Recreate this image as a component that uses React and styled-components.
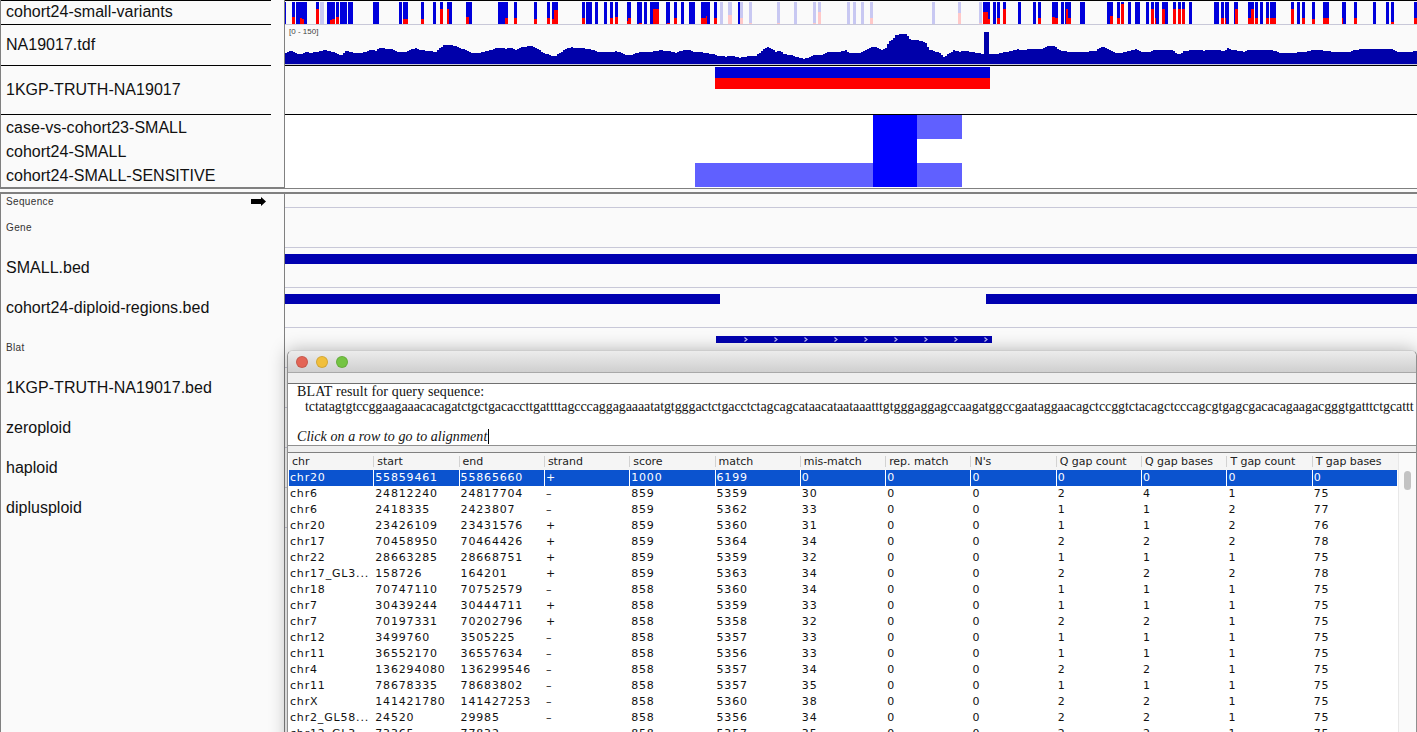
import React from 'react';
import styled, { createGlobalStyle } from 'styled-components';

const GlobalStyle = createGlobalStyle`
  html, body {
    margin: 0;
    padding: 0;
    background: #fafafa;
  }
  * { box-sizing: border-box; }
`;

const Page = styled.div`
  position: relative;
  width: 1417px;
  height: 732px;
  overflow: hidden;
  display: flex;
  flex-direction: column;
  background: #fafafa;
  font-family: "Liberation Sans", Arial, sans-serif;
  color: #111;
`;

const TopPanel = styled.div`
  border-bottom: 2px solid #808080;
`;

const LowerPanel = styled.div`
  margin-top: 3px;
  border-top: 2px solid #808080;
  flex: 1;
  display: flex;
  flex-direction: column;
`;

const Row = styled.div`
  display: grid;
  grid-template-columns: 285px 1fr;
  height: ${p => p.$h}px;
  flex: ${p => (p.$fill ? 1 : 'none')};
`;

const NameCell = styled.div`
  border-left: 1px solid #808080;
  border-right: 1px solid #808080;
  min-width: 0;
`;

const NameBox = styled.div`
  width: 270px;
  height: 100%;
  padding: 0 5px ${p => (p.$lift ? 2 : 0)}px;
  display: flex;
  flex-direction: column;
  justify-content: center;
  border-top: ${p => (p.$top ? '1px solid #000' : 'none')};
  border-bottom: ${p => (p.$line ? '1px solid #000' : 'none')};
`;

const SequenceBox = styled(NameBox)`
  flex-direction: row;
  justify-content: space-between;
  align-items: center;
`;

const Name = styled.div`
  font-size: ${p => (p.$small ? 10 : 16)}px;
  line-height: ${p => (p.$stack ? '24px' : 'normal')};
  letter-spacing: ${p => (p.$small ? '0.35px' : '0.02px')};
  white-space: nowrap;
  color: ${p => (p.$small ? '#333' : '#111')};
`;

const DataCell = styled.div`
  position: relative;
  min-width: 0;
  background: ${p => p.$bg || '#fafafa'};
  border-top: ${p => (p.$top ? '1px solid #000' : 'none')};
  border-bottom: 1px solid ${p => p.$line || '#c8c8d8'};
`;

const TrackSvg = styled.svg`
  display: block;
  width: 1132px;
  height: 100%;
`;

const CoverageBox = styled.div`
  height: 100%;
  border-bottom: 1px solid #c8c8dc;
`;

const RangeLabel = styled.span`
  position: absolute;
  left: 4px;
  top: 2px;
  font-size: 8px;
  color: #444;
`;

// BLAT window floats above the tracks
const Window = styled.div`
  position: absolute;
  left: 287px;
  top: 350px;
  width: 1130px;
  height: 420px;
  background: #eeeeee;
  border: 1px solid #8f8f8f;
  border-top-color: #cdcdcd;
  border-radius: 6px 6px 0 0;
  box-shadow: 0 0 18px rgba(0, 0, 0, 0.28);
`;

const TitleBar = styled.div`
  height: 22px;
  padding: 0 8px;
  display: flex;
  align-items: center;
  gap: 8px;
  border-radius: 5px 5px 0 0;
  background: linear-gradient(#ececec, #cfcfcf);
  border-bottom: 1px solid #a8a8a8;
`;

const Light = styled.span`
  width: 12px;
  height: 12px;
  border-radius: 50%;
  background: ${p => p.$color};
  border: 1px solid rgba(0, 0, 0, 0.12);
`;

const Strip = styled.div`
  height: ${p => p.$h}px;
  background: #eeeeee;
`;

const TextPane = styled.div`
  height: 63px;
  background: #fff;
  border-top: 1px solid #707070;
  border-bottom: 1px solid #909090;
  padding: 0 0 0 9px;
  font-family: "Liberation Serif", "Times New Roman", serif;
  font-size: 14px;
  line-height: 15px;
  color: #111;
  white-space: nowrap;
  overflow: hidden;
`;

const Heading = styled.div`
  letter-spacing: 0.13px;
`;

const Query = styled.div`
  padding-left: 8px;
  margin-bottom: 15px;
  letter-spacing: -0.088px;
`;

const Hint = styled.em`
  display: inline-block;
  padding-right: 1px;
  border-right: 1px solid #000;
  line-height: 15px;
  letter-spacing: 0.07px;
`;

const TableArea = styled.div`
  display: grid;
  grid-template-columns: 1109px 18px;
  padding-left: 1px;
  background: #fff;
  border-top: 1px solid #808080;
  font-family: "DejaVu Sans", Verdana, sans-serif;
  font-size: 11px;
`;

const Columns = styled.div`
  display: grid;
  grid-template-columns: repeat(13, 1fr);
  height: ${p => p.$h}px;
  align-items: center;
  background: ${p => p.$bg};
  color: ${p => p.$color};
`;

const HeadCell = styled.div`
  position: relative;
  padding-left: 3px;
  letter-spacing: -0.05px;
  white-space: nowrap;
  color: #222;
  &:not(:first-child)::before {
    content: '';
    position: absolute;
    left: -1px;
    top: 1px;
    width: 1px;
    height: 11px;
    background: #d2d2d2;
  }
`;

const Cell = styled.div`
  height: 100%;
  line-height: 16px;
  padding-left: 1px;
  letter-spacing: 0.82px;
  white-space: nowrap;
  overflow: hidden;
  border-right: ${p => (p.$selected ? '1px solid #fff' : 'none')};
`;

const ScrollTrack = styled.div`
  background: #fafafa;
  border-left: 1px solid #e8e8e8;
  padding: 18px 5px 0 5px;
`;

const Thumb = styled.div`
  height: 19px;
  border-radius: 4px;
  background: #c3c3c3;
`;

const headers = ['chr', 'start', 'end', 'strand', 'score', 'match', 'mis-match', 'rep. match', "N's", 'Q gap count', 'Q gap bases', 'T gap count', 'T gap bases'];

const rows = [
  ['chr20', '55859461', '55865660', '+', '1000', '6199', '0', '0', '0', '0', '0', '0', '0'],
  ['chr6', '24812240', '24817704', '–', '859', '5359', '30', '0', '0', '2', '4', '1', '75'],
  ['chr6', '2418335', '2423807', '–', '859', '5362', '33', '0', '0', '1', '1', '2', '77'],
  ['chr20', '23426109', '23431576', '+', '859', '5360', '31', '0', '0', '1', '1', '2', '76'],
  ['chr17', '70458950', '70464426', '+', '859', '5364', '34', '0', '0', '2', '2', '2', '78'],
  ['chr22', '28663285', '28668751', '+', '859', '5359', '32', '0', '0', '1', '1', '1', '75'],
  ['chr17_GL3...', '158726', '164201', '+', '859', '5363', '34', '0', '0', '2', '2', '2', '78'],
  ['chr18', '70747110', '70752579', '–', '858', '5360', '34', '0', '0', '1', '1', '1', '75'],
  ['chr7', '30439244', '30444711', '+', '858', '5359', '33', '0', '0', '1', '1', '1', '75'],
  ['chr7', '70197331', '70202796', '+', '858', '5358', '32', '0', '0', '2', '2', '1', '75'],
  ['chr12', '3499760', '3505225', '–', '858', '5357', '33', '0', '0', '1', '1', '1', '75'],
  ['chr11', '36552170', '36557634', '–', '858', '5356', '33', '0', '0', '1', '1', '1', '75'],
  ['chr4', '136294080', '136299546', '–', '858', '5357', '34', '0', '0', '2', '2', '1', '75'],
  ['chr11', '78678335', '78683802', '–', '858', '5357', '35', '0', '0', '1', '1', '1', '75'],
  ['chrX', '141421780', '141427253', '–', '858', '5360', '38', '0', '0', '2', '2', '1', '75'],
  ['chr2_GL58...', '24520', '29985', '–', '858', '5356', '34', '0', '0', '2', '2', '1', '75'],
  ['chr12_GL3...', '73365', '77832', '–', '858', '5357', '35', '0', '0', '2', '2', '1', '75'],
];

// [x, width, red bits as [x, width, height]]
const variantBars = [
  [285, 1], [292, 3, [[292, 3, 7]]], [296, 11, [[300, 2, 6], [302, 2, 5]]], [316, 3, [[316, 3, 15]]],
  [327, 8, [[330, 2, 4], [332, 3, 5]]], [336, 3, [[336, 3, 7]]], [340, 7], [348, 5], [373, 6], [399, 3],
  [403, 5, [[403, 5, 5]]], [421, 3, [[421, 3, 5]]], [433, 3], [440, 3, [[440, 3, 15]]],
  [447, 5, [[447, 2, 15]]], [466, 6, [[466, 3, 7]]], [498, 10, [[505, 3, 6]]], [514, 3, [[514, 3, 6]]],
  [534, 3, [[534, 3, 5]]], [547, 3, [[547, 3, 6]]], [552, 6, [[552, 2, 5], [554, 4, 14]]],
  [582, 3, [[582, 3, 6]]], [586, 6], [595, 3], [604, 3], [610, 3, [[610, 3, 6]]], [615, 3, [[615, 3, 7]]],
  [627, 4, [[627, 1, 3], [628, 3, 6]]], [637, 5, [[639, 3, 1]]], [644, 3], [650, 9, [[653, 6, 15]]],
  [666, 4, [[667, 3, 1]]], [674, 3, [[674, 3, 6]]], [681, 3], [689, 6], [701, 9, [[701, 5, 6], [706, 1, 8]]],
  [714, 3, [[714, 3, 6]]], [738, 2], [983, 7, [[983, 5, 12], [988, 2, 5]]], [993, 3], [997, 3, [[997, 3, 6]]],
  [1003, 3, [[1003, 3, 15]]], [1018, 3], [1033, 3], [1038, 3, [[1038, 3, 6]]],
  [1052, 6, [[1052, 3, 7], [1055, 3, 6]]], [1061, 3], [1065, 6, [[1066, 2, 15], [1068, 3, 6]]],
  [1080, 5], [1107, 6, [[1110, 3, 8]]], [1117, 3, [[1117, 3, 6]]], [1121, 3, [[1121, 3, 20]]], [1128, 3],
  [1135, 5], [1146, 3], [1151, 3, [[1151, 3, 15]]], [1155, 4, [[1155, 1, 6]]], [1162, 6, [[1162, 3, 15]]],
  [1173, 3, [[1173, 3, 15]]], [1178, 3, [[1178, 3, 15]]], [1182, 3, [[1182, 3, 15]]], [1189, 3], [1214, 5],
  [1221, 3, [[1221, 3, 6]]], [1225, 4, [[1225, 1, 6]]], [1234, 4, [[1235, 3, 15]]],
  [1248, 6, [[1248, 3, 6], [1251, 3, 15]]], [1255, 3, [[1255, 3, 6]]], [1260, 3], [1266, 3, [[1266, 3, 6]]],
  [1270, 6, [[1270, 6, 6]]], [1291, 3, [[1291, 3, 15]]], [1297, 3], [1302, 3, [[1302, 3, 6]]],
  [1312, 3, [[1312, 3, 5]]], [1323, 6, [[1323, 6, 6]]], [1342, 4, [[1342, 1, 6]]], [1354, 3, [[1354, 3, 6]]],
  [1373, 3], [1386, 3], [1391, 3, [[1391, 3, 2]]], [1414, 3, [[1414, 3, 6]]],
];

// filtered calls drawn faint: [x, width, pink height]
const faintBars = [
  [320, 4, 0], [720, 3, 0], [728, 4, 9], [740, 3, 6], [749, 3, 1], [777, 3, 1], [794, 3, 0], [813, 3, 1],
  [818, 3, 12], [847, 3, 0], [853, 3, 0], [861, 3, 0], [870, 3, 6], [932, 3, 0], [958, 3, 11], [979, 3, 1],
];

// coverage outline, read off the track in thirds of a pixel: [offset, [x3, y3, ...]]
const coverageParts = [
  [280, [15, 158, 30, 153, 45, 159, 60, 163, 75, 157, 90, 158, 105, 156, 120, 153, 135, 150, 150, 155, 165, 158, 180, 167, 195, 153, 210, 155, 225, 160, 240, 158, 255, 156, 270, 150, 285, 152, 300, 143, 315, 146, 330, 147, 345, 154, 360, 156, 375, 155, 390, 148, 405, 145, 420, 150, 440, 153, 465, 155, 480, 142, 490, 135, 510, 135, 525, 138, 540, 145, 555, 150, 570, 158, 600, 158, 615, 154, 630, 150, 645, 145, 660, 144, 675, 146, 690, 142, 705, 149, 720, 143, 735, 140, 750, 138, 765, 145, 780, 153, 795, 161, 810, 167, 825, 167, 840, 158, 855, 146, 870, 142, 885, 144, 900, 144, 915, 146, 930, 148, 945, 153, 960, 157, 975, 155, 990, 156, 1005, 154, 1020, 158, 1035, 166, 1050, 165, 1065, 160, 1080, 155, 1095, 157, 1110, 156, 1125, 153, 1140, 151, 1155, 152, 1170, 155, 1185, 158]],
  [680, [0, 153, 15, 150, 25, 148, 40, 155, 60, 157, 85, 161, 100, 163, 115, 168, 135, 170, 150, 168, 170, 170, 175, 173, 190, 171, 200, 168, 225, 168, 240, 155, 255, 143, 265, 142, 275, 148, 285, 155, 298, 153, 310, 162, 330, 165, 350, 172, 370, 176, 385, 172, 400, 165, 420, 165, 440, 157, 470, 157, 495, 150, 505, 158, 530, 160, 545, 155, 560, 148, 570, 142, 590, 142, 600, 149, 612, 148, 625, 125, 635, 120, 645, 105, 660, 102, 675, 102, 690, 120, 705, 120, 720, 123, 735, 128, 745, 148, 760, 153, 780, 160, 790, 173, 805, 160, 820, 150, 835, 156, 850, 153, 880, 157, 895, 160, 928, 163, 945, 162, 965, 158, 985, 154, 1010, 148, 1030, 150, 1050, 147, 1085, 146, 1100, 138]],
  [1040, [20, 138, 40, 138, 60, 152, 85, 156, 110, 157, 130, 156, 150, 154, 165, 152, 180, 143, 190, 140, 205, 150, 225, 158, 240, 159, 260, 153, 285, 148, 300, 155, 330, 155, 340, 149, 395, 150, 415, 165, 430, 153, 460, 149, 490, 152, 510, 150, 550, 152, 560, 145, 575, 150, 610, 155, 625, 150, 670, 149, 700, 152, 720, 160, 750, 159, 790, 156, 815, 150, 860, 152, 880, 157, 920, 157, 940, 150, 975, 146, 1000, 146, 1050, 147, 1070, 155, 1090, 157, 1110, 155, 1130, 153]],
];

function coveragePath() {
  const pts = [];
  coverageParts.forEach(([off, list]) => {
    for (let i = 0; i < list.length; i += 2) {
      pts.push([off + list[i] / 3, list[i + 1] / 3]);
    }
  });
  let d = 'M285 64';
  let j = 0;
  for (let x = 285; x < 1417; x += 2) {
    while (j < pts.length - 2 && pts[j + 1][0] < x) j++;
    const [x0, y0] = pts[j];
    const [x1, y1] = pts[j + 1];
    const t = Math.max(0, Math.min(1, (x - x0) / (x1 - x0)));
    const y = Math.round(y0 + (y1 - y0) * t);
    d += `V${y}H${x + 2}`;
  }
  return d + 'V64Z';
}

function ArrowIcon() {
  return (
    <svg width="15" height="9" viewBox="0 0 15 9">
      <path d="M0 2H10V0L15 4.5L10 9V7H0Z" fill="#000" />
    </svg>
  );
}

function VariantTrack() {
  return (
    <TrackSvg viewBox="285 1 1132 23" shapeRendering="crispEdges">
      {faintBars.map(([x, w, h]) => (
        <g key={x}>
          <rect x={x} y="2" width={w} height="22" fill="#c8c8f2" />
          {h > 0 && <rect x={x} y={24 - h} width={w} height={h} fill="#ffc8c8" />}
        </g>
      ))}
      {variantBars.map(([x, w, reds]) => (
        <g key={x}>
          <rect x={x} y="2" width={w} height="22" fill="#0000dc" />
          {reds && reds.map(([rx, rw, rh]) => (
            <rect key={rx} x={rx} y={24 - rh} width={rw} height={rh} fill="#ff0000" />
          ))}
        </g>
      ))}
    </TrackSvg>
  );
}

function CoverageTrack() {
  return (
    <CoverageBox>
      <TrackSvg viewBox="285 25 1132 39" shapeRendering="crispEdges">
        <path d={coveragePath()} fill="#0000aa" />
        <rect x="984" y="32" width="5" height="32" fill="#0000aa" />
      </TrackSvg>
      <RangeLabel>[0 - 150]</RangeLabel>
    </CoverageBox>
  );
}

function TruthTrack() {
  return (
    <TrackSvg viewBox="285 66 1132 48" shapeRendering="crispEdges">
      <rect x="715" y="67" width="275" height="11" fill="#0000d4" />
      <rect x="715" y="78" width="275" height="11" fill="#ff0000" />
    </TrackSvg>
  );
}

function CallsTrack() {
  return (
    <TrackSvg viewBox="285 115 1132 72" shapeRendering="crispEdges">
      <rect x="917" y="115" width="45" height="24" fill="#6060ff" />
      <rect x="695" y="163" width="267" height="24" fill="#6060ff" />
      <rect x="873" y="115" width="44" height="72" fill="#0000ff" />
    </TrackSvg>
  );
}

function BedTrack({ top, spans }) {
  return (
    <TrackSvg viewBox={`285 ${top} 1132 39`} shapeRendering="crispEdges">
      {spans.map(([x, w]) => (
        <rect key={x} x={x} y={top + 6} width={w} height="10" fill="#0000b0" />
      ))}
    </TrackSvg>
  );
}

function BlatTrack() {
  const chevrons = [746, 776, 806, 836, 866, 896, 926, 956, 986];
  return (
    <TrackSvg viewBox="285 328 1132 39">
      <rect x="716" y="336" width="276" height="7" fill="#0000b0" shapeRendering="crispEdges" />
      {chevrons.map(x => (
        <path key={x} d={`M${x - 1.5} 337.5L${x + 1} 339.5L${x - 1.5} 341.5`} fill="none" stroke="#b8b8ee" strokeWidth="1.2" />
      ))}
    </TrackSvg>
  );
}

const lowerNames = ['1KGP-TRUTH-NA19017.bed', 'zeroploid', 'haploid', 'diplusploid'];
const query = 'tctatagtgtccggaagaaacacagatctgctgacaccttgattttagcccaggagaaaatatgtgggactctgacctctagcagcataacataataaatttgtgggaggagccaagatggccgaataggaacagctccggtctacagctcccagcgtgagcgacacagaagacgggtgatttctgcattt';

export default function App() {
  return (
    <Page>
      <GlobalStyle />

      <TopPanel>
        <Row $h={25}>
          <NameCell>
            <NameBox $top $line $lift><Name>cohort24-small-variants</Name></NameBox>
          </NameCell>
          <DataCell $top><VariantTrack /></DataCell>
        </Row>
        <Row $h={41}>
          <NameCell>
            <NameBox $line><Name>NA19017.tdf</Name></NameBox>
          </NameCell>
          <DataCell $line="#000"><CoverageTrack /></DataCell>
        </Row>
        <Row $h={49}>
          <NameCell>
            <NameBox $line><Name>1KGP-TRUTH-NA19017</Name></NameBox>
          </NameCell>
          <DataCell $line="#000"><TruthTrack /></DataCell>
        </Row>
        <Row $h={72}>
          <NameCell>
            <NameBox>
              <Name $stack>case-vs-cohort23-SMALL</Name>
              <Name $stack>cohort24-SMALL</Name>
              <Name $stack>cohort24-SMALL-SENSITIVE</Name>
            </NameBox>
          </NameCell>
          <DataCell $bg="#fff" $line="#fff"><CallsTrack /></DataCell>
        </Row>
      </TopPanel>

      <LowerPanel>
        <Row $h={14}>
          <NameCell>
            <SequenceBox><Name $small>Sequence</Name><ArrowIcon /></SequenceBox>
          </NameCell>
          <DataCell />
        </Row>
        <Row $h={40}>
          <NameCell><NameBox $lift><Name $small>Gene</Name></NameBox></NameCell>
          <DataCell />
        </Row>
        <Row $h={40}>
          <NameCell><NameBox><Name>SMALL.bed</Name></NameBox></NameCell>
          <DataCell><BedTrack top={248} spans={[[285, 1132]]} /></DataCell>
        </Row>
        <Row $h={40}>
          <NameCell><NameBox><Name>cohort24-diploid-regions.bed</Name></NameBox></NameCell>
          <DataCell><BedTrack top={288} spans={[[285, 435], [986, 431]]} /></DataCell>
        </Row>
        <Row $h={40}>
          <NameCell><NameBox $lift><Name $small>Blat</Name></NameBox></NameCell>
          <DataCell><BlatTrack /></DataCell>
        </Row>
        {lowerNames.map(name => (
          <Row $h={40} key={name}>
            <NameCell><NameBox><Name>{name}</Name></NameBox></NameCell>
            <DataCell />
          </Row>
        ))}
        <Row $fill>
          <NameCell />
          <DataCell $line="#fafafa" />
        </Row>
      </LowerPanel>

      <Window>
        <TitleBar>
          <Light $color="#e36556" />
          <Light $color="#f1bf3b" />
          <Light $color="#74c442" />
        </TitleBar>
        <Strip $h={10} />
        <TextPane>
          <Heading>BLAT result for query sequence:</Heading>
          <Query>{query}</Query>
          <Hint>Click on a row to go to alignment</Hint>
        </TextPane>
        <Strip $h={6} />
        <TableArea>
          <div>
            <Columns $h={17} $bg="#f5f5f5" $color="#222">
              {headers.map(h => <HeadCell key={h}>{h}</HeadCell>)}
            </Columns>
            {rows.map((row, i) => (
              <Columns key={i} $h={16} $bg={i === 0 ? '#0b53cf' : '#fff'} $color={i === 0 ? '#fff' : '#111'}>
                {row.map((value, j) => (
                  <Cell key={j} $selected={i === 0}>{value}</Cell>
                ))}
              </Columns>
            ))}
          </div>
          <ScrollTrack><Thumb /></ScrollTrack>
        </TableArea>
      </Window>
    </Page>
  );
}
